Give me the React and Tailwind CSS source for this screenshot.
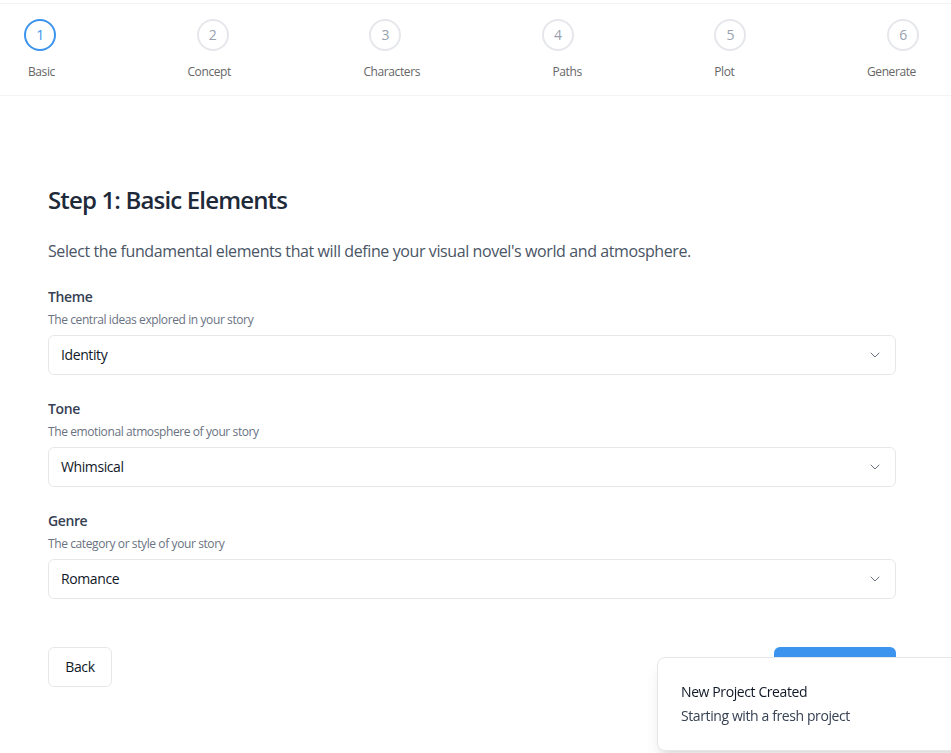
import { ChevronDown } from "lucide-react";

const steps = [
    { n: 1, label: "Basic" },
    { n: 2, label: "Concept" },
    { n: 3, label: "Characters" },
    { n: 4, label: "Paths" },
    { n: 5, label: "Plot" },
    { n: 6, label: "Generate" },
];

const fields = [
    { label: "Theme", hint: "The central ideas explored in your story", value: "Identity" },
    { label: "Tone", hint: "The emotional atmosphere of your story", value: "Whimsical" },
    { label: "Genre", hint: "The category or style of your story", value: "Romance" },
];

function Field({ label, hint, value }) {
    return (
        <div>
            <div className="text-sm leading-5 font-semibold text-gray-700">{label}</div>
            <div className="mt-[5px] text-xs leading-4 text-gray-500">{hint}</div>
            <div className="mt-[7px] h-10 flex items-center justify-between pl-3 pr-3 border border-gray-200 rounded-md bg-white">
                <span className="text-sm text-gray-900">{value}</span>
                <ChevronDown className="w-4 h-4 text-gray-500" strokeWidth={1.5} />
            </div>
        </div>
    );
}

export default function App() {
    return (
        <div className="min-h-[753px] bg-white font-['Open_Sans','Noto_Sans',sans-serif] tracking-tight text-gray-900">
            {/* stepper header */}
            <div className="pt-[3px]">
                <div className="border-t border-b border-gray-100 pt-[15px] pb-[15px]">
                    <div className="flex justify-between pl-6 pr-8">
                        {steps.map((s) => (
                            <div
                                key={s.n}
                                className={`w-8 h-8 rounded-full border-2 flex items-center justify-center text-sm ${s.n === 1 ? "border-[#3d94ee] text-[#3d94ee]" : "border-gray-200 text-gray-400"}`}
                            >
                                {s.n}
                            </div>
                        ))}
                    </div>
                    <div className="mt-[13px] flex justify-between pl-7 pr-[35px]">
                        {steps.map((s) => (
                            <span key={s.n} className="text-xs leading-4 text-[#666]">{s.label}</span>
                        ))}
                    </div>
                </div>
            </div>

            {/* main */}
            <div className="pl-12 pr-[55px] pt-[88px]">
                <h2 className="text-2xl leading-8 font-semibold tracking-[-0.035em] text-gray-800">Step 1: Basic Elements</h2>
                <p className="mt-[23px] text-base leading-6 text-gray-600">
                    Select the fundamental elements that will define your visual novel's world and atmosphere.
                </p>
                <div className="mt-6 flex flex-col gap-6">
                    {fields.map((f) => (
                        <Field key={f.label} {...f} />
                    ))}
                </div>
                <div className="mt-12 flex justify-between">
                    <button className="h-10 w-16 rounded-md border border-gray-200 bg-white text-sm font-medium text-gray-900">Back</button>
                    <button className="h-10 w-[122px] rounded-md bg-[#3d94ee] text-sm font-medium text-white">Next</button>
                </div>
            </div>

            {/* toast */}
            <div className="fixed left-[657px] top-[657px] w-[320px] rounded-lg border border-gray-200 bg-white shadow-lg px-[23px] pt-6 pb-6">
                <div className="text-sm leading-5 font-medium text-gray-900">New Project Created</div>
                <div className="mt-1 text-sm leading-5 text-gray-700">Starting with a fresh project</div>
            </div>
        </div>
    );
}
